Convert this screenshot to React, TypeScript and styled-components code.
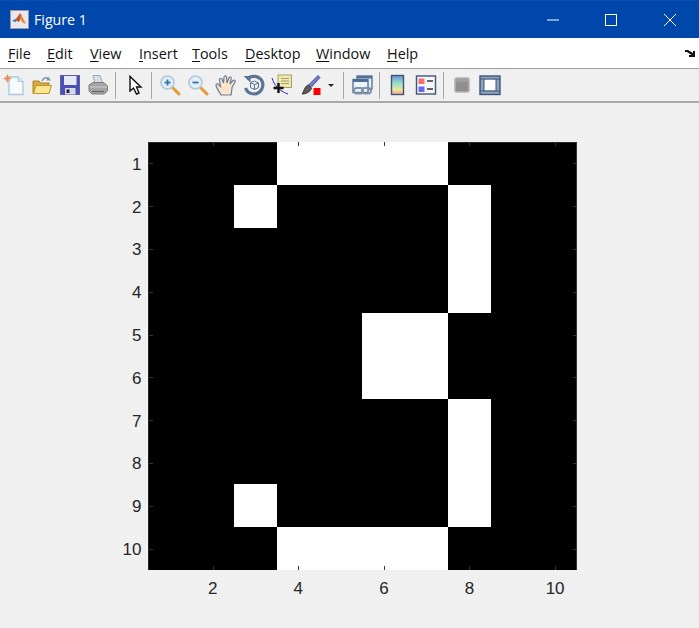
import React from 'react';
import styled, { createGlobalStyle } from 'styled-components';

const GlobalStyle = createGlobalStyle`
  html, body { margin: 0; padding: 0; background: #f0f0f0; }
  body { width: 699px; height: 628px; overflow: hidden; }
`;

const Window = styled.div`
  width: 699px;
  height: 628px;
  display: flex;
  flex-direction: column;
  background: #f0f0f0;
`;

const TitleBar = styled.div`
  height: 38px;
  display: flex;
  align-items: center;
  background: #0047ab;
  border-top: 1px solid #0b4fb0;
  box-sizing: border-box;
  padding-left: 10px;
  color: #fff;
`;

const TitleText = styled.span`
  margin-left: 5px;
  font: 14.2px "Open Sans", "Noto Sans", sans-serif;
  flex: 1;
`;

const WinButton = styled.div`
  width: 58.5px;
  height: 100%;
  display: flex;
  align-items: center;
  justify-content: center;
`;

const MenuBar = styled.div`
  height: 30px;
  display: flex;
  align-items: center;
  background: #fff;
  padding-left: 8px;
  padding-right: 4px;
  border-bottom: 1px solid #a0a0a0;
  font: 14.4px "Open Sans", "Noto Sans", sans-serif;
  color: #111;
`;

const MenuItem = styled.span<{ $w: number }>`
  width: ${(p) => p.$w}px;
`;

const Mnemonic = styled.span`
  text-decoration: underline;
  text-underline-offset: 2px;
`;

const MenuGrip = styled.div`
  margin-left: auto;
  display: flex;
`;

const Toolbar = styled.div`
  height: 32px;
  display: flex;
  align-items: center;
  background: #f0f0f0;
  border-bottom: 2px solid #a9a9a9;
`;

const ToolButton = styled.div`
  width: 28px;
  height: 28px;
  display: flex;
  align-items: center;
  justify-content: center;
`;

const Caret = styled.div`
  width: 0;
  height: 0;
  margin: 0 4px 0 4px;
  border-left: 3px solid transparent;
  border-right: 3px solid transparent;
  border-top: 3px solid #222;
`;

const ToolSep = styled.div<{ $before: number; $after: number }>`
  width: 1px;
  height: 27px;
  background: #a6a6a6;
  margin-left: ${(p) => p.$before}px;
  margin-right: ${(p) => p.$after}px;
`;

const FigureArea = styled.div`
  flex: 1;
  display: grid;
  grid-template-columns: 428px;
  grid-template-rows: 428px auto;
  padding: 39px 0 0 148.5px;
`;

const Plot = styled.div`
  position: relative;
  display: grid;
  grid-template-columns: repeat(10, 1fr);
  grid-template-rows: repeat(10, 1fr);
  background: #000;
  box-shadow: -1px 0 0 #262626, inset -1px 0 0 #333, inset 0 1px 0 #262626;
`;

const Cell = styled.div<{ $on: boolean }>`
  background: ${(p) => (p.$on ? '#fff' : 'transparent')};
`;

const YAxis = styled.div`
  position: absolute;
  right: 100%;
  top: 0;
  bottom: 0;
  display: grid;
  grid-template-rows: repeat(10, 1fr);
`;

const YTick = styled.div`
  position: relative;
  display: flex;
  align-items: center;
  justify-content: flex-end;
  padding: 3px 7px 0 0;
  font: 17px "Liberation Sans", Arial, sans-serif;
  color: #262626;

  &::before,
  &::after {
    content: '';
    position: absolute;
    top: 50%;
    width: 4px;
    height: 1px;
    background: #333;
  }
  &::before {
    left: calc(100% + 424px);
  }
  &::after {
    left: 100%;
  }
`;

const XAxis = styled.div`
  display: grid;
  grid-template-columns: repeat(10, 1fr);
`;

const XTick = styled.div<{ $marked: boolean }>`
  position: relative;
  display: flex;
  justify-content: center;
  height: 30px;
  padding-top: 9px;
  font: 17px "Liberation Sans", Arial, sans-serif;
  color: #262626;

  &::before,
  &::after {
    content: '';
    display: ${(p) => (p.$marked ? 'block' : 'none')};
    position: absolute;
    left: 50%;
    width: 1px;
    height: 4px;
    background: #333;
  }
  &::before {
    bottom: calc(100% + 424px);
  }
  &::after {
    bottom: 100%;
  }
`;

// 10 x 10 binary image shown in the figure
const IMAGE = [
  '0001111000',
  '0010000100',
  '0000000100',
  '0000000100',
  '0000011000',
  '0000011000',
  '0000000100',
  '0000000100',
  '0010000100',
  '0001111000',
];

const MENUS: { label: string; w: number }[] = [
  { label: 'File', w: 39 },
  { label: 'Edit', w: 43 },
  { label: 'View', w: 49 },
  { label: 'Insert', w: 53 },
  { label: 'Tools', w: 53 },
  { label: 'Desktop', w: 71 },
  { label: 'Window', w: 71 },
  { label: 'Help', w: 40 },
];

const Ico: React.FC<{ children: React.ReactNode; size?: number }> = ({ children, size = 22 }) => (
  <svg width={size} height={size} viewBox="0 0 22 22" fill="none">
    {children}
  </svg>
);

const MatlabLogo = () => (
  <svg width="19" height="19" viewBox="0 0 19 19">
    <rect x="0.5" y="0.5" width="18" height="18" fill="#e8e8ee" stroke="#9a9aa4" />
    <path d="M2 11 L6 8.5 L8 9.5 L5.5 12 Z" fill="#3d7fb5" />
    <path d="M6 9 L10 3 L12 6 L9 12 L7 11 Z" fill="#c9502a" />
    <path d="M10 3 L13 8 L16 14 L12.5 12.5 L10.5 9 Z" fill="#e88a2a" />
  </svg>
);

const NewIcon = () => (
  <Ico>
    <path d="M6 3 H15 L20 7.5 V20.5 H6 Z" fill="#f6fbff" stroke="#a8c8e2" strokeWidth="1.3" />
    <path d="M15 3 V7.5 H20" fill="#dceaf5" stroke="#a8c8e2" />
    <circle cx="4.5" cy="4.5" r="2.8" fill="#f2a57a" />
    <path d="M4.5 0.5 V8.5 M0.5 4.5 H8.5" stroke="#e88a5c" strokeWidth="1" />
  </Ico>
);

const OpenIcon = () => (
  <Ico>
    <path d="M2 7 H8 L10 9 H18 V19.5 H2 Z" fill="#d9a93c" stroke="#a98526" />
    <path d="M2.5 19.5 L5 11.5 H20.5 L18 19.5 Z" fill="#fbe58e" stroke="#b8952f" />
    <path d="M11 7 C13 3 16 3 18 5.5" stroke="#7f97ad" strokeWidth="1.5" />
    <path d="M17 2.5 L20 6.5 L15.5 6.5 Z" fill="#7f97ad" />
  </Ico>
);

const SaveIcon = () => (
  <Ico>
    <rect x="1.5" y="1.5" width="19" height="19" fill="#4a4fb5" stroke="#5a5fa8" />
    <rect x="5" y="2" width="12.5" height="9" fill="#e8e9f6" />
    <rect x="6" y="14" width="10.5" height="6.5" fill="#d8d8e4" />
    <rect x="7.5" y="15.5" width="3" height="3.5" fill="#22224a" />
  </Ico>
);

const PrintIcon = () => (
  <Ico>
    <path d="M6 1.5 H13 L16 10 H8 Z" fill="#d7dee5" stroke="#a0aab3" />
    <path d="M2 11 L6 8.5 H17 L20.5 12 V17 L17 20 H5 L2 17 Z" fill="#a4a4a4" stroke="#7c7c7c" />
    <path d="M3 13 H20" stroke="#d0d0d0" />
    <path d="M5 17.5 H17" stroke="#666" strokeWidth="1.2" />
  </Ico>
);

const PointerIcon = () => (
  <Ico>
    <path d="M6 2.5 V17 L9.5 14 L12.5 20 L15 19 L12.5 13 H17 Z" fill="#fff" stroke="#111" strokeWidth="1.4" />
  </Ico>
);

const ZoomIcon: React.FC<{ plus?: boolean }> = ({ plus }) => (
  <Ico>
    <path d="M13.5 13.5 L20 20" stroke="#e39b35" strokeWidth="3" strokeLinecap="round" />
    <circle cx="8.5" cy="8.5" r="6.5" fill="#dfeffb" stroke="#b4c7d8" strokeWidth="1.6" />
    <path d="M5.5 8.5 H11.5" stroke="#3d6fa8" strokeWidth="1.8" />
    {plus && <path d="M8.5 5.5 V11.5" stroke="#3d6fa8" strokeWidth="1.8" />}
  </Ico>
);

const HandIcon = () => (
  <Ico>
    <path
      d="M6 21 C3.5 17 1.5 13.5 1 11.5 C1 9.5 3 9.5 4 11 L5.5 12.5 L4.5 5.5 C4.5 3.8 6.8 3.8 7.2 5.5 L8.5 9 L9 3 C9.3 1.4 11.3 1.4 11.5 3 L12 9 L14 3.8 C14.6 2.5 16.5 3 16.2 4.7 L15 10 L18 6.5 C19.2 5.5 20.6 6.5 20 8 L17 13.5 C16.8 16.5 16.5 19 16 21 Z"
      fill="#fbe3cc"
      stroke="#6d7f96"
      strokeWidth="1.2"
    />
  </Ico>
);

const RotateIcon = () => (
  <Ico>
    <path d="M4 5 C8 1 16 1.5 19 7 C21.5 12.5 18 19.5 11.5 20 C7 20 4 18 2.5 14" stroke="#5b7594" strokeWidth="3.2" />
    <path d="M0.5 2 H7.5 V8.5 Z" fill="#5b7594" />
    <path d="M7.5 8.5 L11.5 7 L15.5 9 V13.5 L11.5 15.5 L7.5 13.5 Z" fill="#e9eef3" stroke="#5b7594" />
    <path d="M7.5 8.5 L11.5 10.5 L15.5 9 M11.5 10.5 V15.5" stroke="#5b7594" />
  </Ico>
);

const DataTipIcon = () => (
  <Ico>
    <path d="M1 4 C3 11 8 17 17 20" stroke="#2a2ad0" strokeWidth="1" />
    <rect x="7" y="1" width="13.5" height="12.5" fill="#f1eab0" stroke="#a3a06a" />
    <path d="M10 4.5 H18 M10 7 H18 M10 9.5 H18" stroke="#a3a06a" />
    <path d="M7.5 9 V19 M2.5 14 H12.5" stroke="#111" strokeWidth="2.4" />
  </Ico>
);

const BrushIcon = () => (
  <Ico>
    <path d="M19 1.5 L21 3.5 L12 13.5 L9.5 11 Z" fill="#6f7fcf" stroke="#4a5690" />
    <path d="M9 11 L12.5 14.5 C11 18 7 20 3 20 C5 18 5 13 9 11 Z" fill="#5d5d5d" stroke="#333" />
    <rect x="14.5" y="14" width="7" height="7" fill="#ff0000" />
  </Ico>
);

const LinkIcon = () => (
  <Ico>
    <rect x="6" y="2" width="15" height="13" fill="#e8eef5" stroke="#4f6f93" strokeWidth="1.3" />
    <rect x="6" y="2" width="15" height="2.5" fill="#4f6f93" />
    <rect x="2" y="5.5" width="15" height="13" fill="#eef3f8" stroke="#4f6f93" strokeWidth="1.3" />
    <rect x="2" y="5.5" width="15" height="2.5" fill="#4f6f93" />
    <rect x="3" y="14" width="9" height="5.5" rx="2.7" fill="none" stroke="#7d94ad" strokeWidth="2" />
    <rect x="11" y="14" width="9" height="5.5" rx="2.7" fill="none" stroke="#7d94ad" strokeWidth="2" />
  </Ico>
);

const ColorbarIcon = () => (
  <Ico>
    <defs>
      <linearGradient id="cb" x1="0" y1="0" x2="0" y2="1">
        <stop offset="0" stopColor="#6f8ed8" />
        <stop offset="0.4" stopColor="#8fe0c8" />
        <stop offset="0.75" stopColor="#f2e49a" />
        <stop offset="1" stopColor="#f0a090" />
      </linearGradient>
    </defs>
    <rect x="4.5" y="1.5" width="12" height="19" fill="url(#cb)" stroke="#3f5478" strokeWidth="1.4" />
  </Ico>
);

const LegendIcon = () => (
  <Ico>
    <rect x="1.5" y="2" width="19" height="18" fill="#f5f7fa" stroke="#3f5478" strokeWidth="1.4" />
    <rect x="3.5" y="4.5" width="6" height="5.5" fill="#ee7070" />
    <rect x="3.5" y="12.5" width="6" height="5.5" fill="#6a6ae6" />
    <path d="M12 7 H18 M12 15 H18" stroke="#333" strokeWidth="1.4" />
  </Ico>
);

const HideIcon = () => (
  <Ico>
    <rect x="4" y="4" width="14" height="14" rx="1.5" fill="#8f8f8f" stroke="#b4b4b4" strokeWidth="1.6" />
    <rect x="5" y="5" width="12" height="3" fill="#a0a0a0" />
  </Ico>
);

const ShowIcon = () => (
  <Ico>
    <rect x="1" y="2" width="20" height="18.5" fill="#8fa2ba" stroke="#3f5478" strokeWidth="1.4" />
    <rect x="5" y="5.5" width="12" height="11" fill="#fff" />
    <path d="M1 5 H21 M1 17 H21" stroke="#3f5478" strokeWidth="1.2" />
    <path d="M5 5 V17 M17 5 V17" stroke="#3f5478" strokeWidth="1" />
  </Ico>
);

const App: React.FC = () => (
  <Window>
    <GlobalStyle />
    <TitleBar>
      <MatlabLogo />
      <TitleText>Figure 1</TitleText>
      <WinButton>
        <svg width="12" height="2" viewBox="0 0 12 2">
          <path d="M0 1 H12" stroke="#fff" />
        </svg>
      </WinButton>
      <WinButton>
        <svg width="12" height="12" viewBox="0 0 12 12">
          <rect x="0.5" y="0.5" width="11" height="11" fill="none" stroke="#fff" />
        </svg>
      </WinButton>
      <WinButton>
        <svg width="12" height="12" viewBox="0 0 12 12">
          <path d="M0 0 L12 12 M12 0 L0 12" stroke="#fff" />
        </svg>
      </WinButton>
    </TitleBar>

    <MenuBar>
      {MENUS.map((m) => (
        <MenuItem key={m.label} $w={m.w}>
          <Mnemonic>{m.label[0]}</Mnemonic>
          {m.label.slice(1)}
        </MenuItem>
      ))}
      <MenuGrip>
        <svg width="10" height="8" viewBox="0 0 10 8">
          <path d="M0 1 H3 L8 4 V2 L10 2 V8 H4 V6 H6.5 L2 3 H0 Z" fill="#111" />
        </svg>
      </MenuGrip>
    </MenuBar>

    <Toolbar>
      <ToolButton><NewIcon /></ToolButton>
      <ToolButton><OpenIcon /></ToolButton>
      <ToolButton><SaveIcon /></ToolButton>
      <ToolButton><PrintIcon /></ToolButton>
      <ToolSep $before={3} $after={5} />
      <ToolButton><PointerIcon /></ToolButton>
      <ToolSep $before={2} $after={4} />
      <ToolButton><ZoomIcon plus /></ToolButton>
      <ToolButton><ZoomIcon /></ToolButton>
      <ToolButton><HandIcon /></ToolButton>
      <ToolButton><RotateIcon /></ToolButton>
      <ToolButton><DataTipIcon /></ToolButton>
      <ToolButton><BrushIcon /></ToolButton>
      <Caret />
      <ToolSep $before={5} $after={4} />
      <ToolButton><LinkIcon /></ToolButton>
      <ToolSep $before={3} $after={4} />
      <ToolButton><ColorbarIcon /></ToolButton>
      <ToolButton><LegendIcon /></ToolButton>
      <ToolSep $before={3} $after={4} />
      <ToolButton><HideIcon /></ToolButton>
      <ToolButton><ShowIcon /></ToolButton>
    </Toolbar>

    <FigureArea>
      <Plot>
        <YAxis>
          {IMAGE.map((_, i) => (
            <YTick key={i}>{i + 1}</YTick>
          ))}
        </YAxis>
        {IMAGE.flatMap((row, r) =>
          row.split('').map((v, c) => <Cell key={`${r}-${c}`} $on={v === '1'} />)
        )}
      </Plot>
      <XAxis>
        {Array.from({ length: 10 }, (_, i) => (
          <XTick key={i} $marked={i % 2 === 1}>
            {i % 2 === 1 ? i + 1 : ''}
          </XTick>
        ))}
      </XAxis>
    </FigureArea>
  </Window>
);

export default App;
